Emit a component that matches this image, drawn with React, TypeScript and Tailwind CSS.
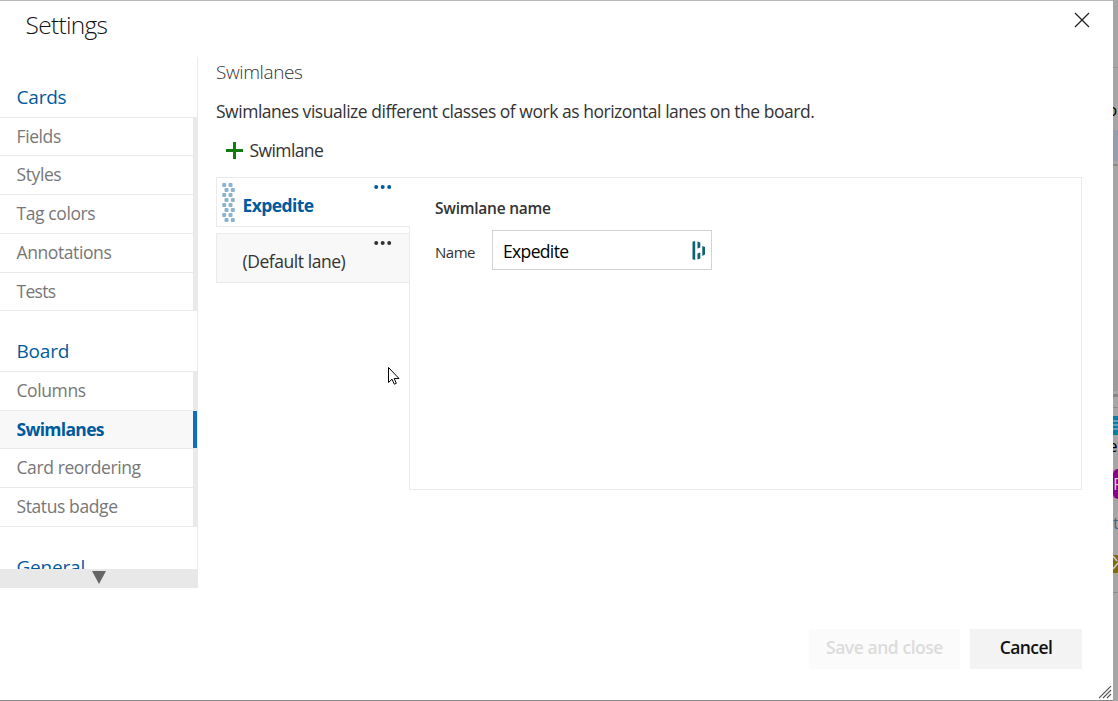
import React from 'react';

const cardItems = [
  { label: 'Fields', h: 'h-[38px]' },
  { label: 'Styles', h: 'h-[39px]' },
  { label: 'Tag colors', h: 'h-[39px]' },
  { label: 'Annotations', h: 'h-[39px]' },
  { label: 'Tests', h: 'h-[38px]' },
];

const boardItems = [
  { label: 'Columns', h: 'h-[39px]' },
  { label: 'Swimlanes', h: 'h-[38px]' },
  { label: 'Card reordering', h: 'h-[39px]' },
  { label: 'Status badge', h: 'h-[39px]' },
];

function NavGroup({ title, items, active }: { title: string; items: { label: string; h: string }[]; active?: string }) {
  return (
    <section>
      <h2 className="flex h-[61px] items-end border-b border-[#eaeaea] pb-[6px] pl-[16.5px] text-[19px] leading-[28px] tracking-[-0.2px] text-[#005a9e]">
        {title}
      </h2>
      {items.map(({ label, h }) => {
        const on = label === active;
        return (
          <div key={label} className={`${h} flex`}>
            <div
              className={`flex flex-1 items-center border-b border-[#eaeaea] pb-[2px] pl-[16.5px] text-[17.5px] leading-6 ${
                on ? 'bg-[#f8f8f8] font-bold tracking-[-0.7px] text-[#005a9e]' : 'text-[#777]'
              } ${on ? '' : label === 'Tests' ? 'tracking-[-0.7px]' : 'tracking-[-0.4px]'}`}
            >
              {label}
            </div>
            <div className={`w-1 ${on ? 'border-b border-[#eaeaea] bg-[#106ebe]' : 'bg-[#eaeaea]'}`} />
          </div>
        );
      })}
    </section>
  );
}

function Sidebar() {
  return (
    <nav className="flex h-[531px] w-[198px] shrink-0 flex-col">
      <div className="h-[512px] overflow-hidden border-r border-[#eaeaea]">
        <NavGroup title="Cards" items={cardItems} />
        <NavGroup title="Board" items={boardItems} active="Swimlanes" />
        <NavGroup title="General" items={[]} />
      </div>
      <div className="flex h-[19px] justify-center bg-[#e8e8e8] pt-[2px]">
        <svg width="14" height="13" viewBox="0 0 14 13">
          <path d="M0 0H14L7 13Z" fill="#666" />
        </svg>
      </div>
    </nav>
  );
}

function Dots({ color }: { color: string }) {
  return (
    <svg width="18" height="4" viewBox="0 0 18 4" fill={color}>
      <circle cx="2.2" cy="2" r="2" />
      <circle cx="8.7" cy="2" r="2" />
      <circle cx="15.2" cy="2" r="2" />
    </svg>
  );
}

function Grip() {
  return (
    <svg width="14" height="40" viewBox="0 0 14 40" fill="#8ab4d2">
      {[0, 1, 2, 3, 4, 5, 6, 7].map((r) => (
        <g key={r}>
          <rect x={r % 2 ? 2.5 : 0.2} y={r * 5} width="4" height="4" rx="1" />
          <rect x={r % 2 ? 8.8 : 6.5} y={r * 5} width="4" height="4" rx="1" />
        </g>
      ))}
    </svg>
  );
}

function Lanes() {
  return (
    <div className="flex h-[313px] w-[866px]">
      <div className="flex w-[194px] shrink-0 flex-col">
        <div className="flex h-[50px] border border-r-0 border-[#eaeaea] bg-white">
          <div className="w-[25.5px] shrink-0 pl-[5px] pt-[5px]"><Grip /></div>
          <div className="flex-1 pt-[15px] text-[17.5px] font-bold leading-6 tracking-[-0.6px] text-[#005a9e]">Expedite</div>
          <div className="flex w-[36px] items-start pt-[7px]"><Dots color="#005a9e" /></div>
        </div>
        <div className="h-[6px] border-r border-[#eaeaea]" />
        <div className="flex h-[50px] border border-[#eaeaea] bg-[#f8f8f8]">
          <div className="flex-1 pl-[25.5px] pt-[15px] text-[17.5px] leading-6 tracking-[-0.45px] text-[#333]">(Default lane)</div>
          <div className="flex w-[35px] items-start pt-[7px]"><Dots color="#333" /></div>
        </div>
        <div className="flex-1 border-r border-[#eaeaea]" />
      </div>
      <div className="flex-1 border-y border-r border-[#eaeaea] pl-[25px] pt-[18px]">
        <h3 className="text-[15.5px] font-semibold leading-6 tracking-[-0.25px] text-[#333]">Swimlane name</h3>
        <div className="mt-[10px] flex items-center">
          <label className="w-[57px] pt-[3px] text-[15px] leading-6 tracking-[-0.5px] text-[#333]">Name</label>
          <div className="flex h-10 w-[220px] items-center justify-between border border-[#d3d3d3] pl-[10px] pr-[5px]">
            <span className="pt-[1px] text-[17.5px] leading-6 tracking-[-0.65px] text-black">Expedite</span>
            <svg width="14" height="19" viewBox="0 0 14 19" fill="#0e6073">
              <path d="M.5.8 3.2 0V19L.5 18.2ZM5.5.5 8.3 1.5V6.5L5.5 7.5ZM5.5 12.5 8.3 11.5V17.5L5.5 18.5ZM10.3 5 13 6V13.5L10.3 15Z" />
            </svg>
          </div>
        </div>
      </div>
    </div>
  );
}

function BoardEdge() {
  return (
    <div className="flex h-[701px] w-[5px] shrink-0 flex-col overflow-hidden bg-[#a6a6a6] text-[17px]">
      <div className="h-[68px] border-b border-[#969696]" />
      <div className="flex h-[62px] items-center justify-start pt-[22px]"><span className="-ml-[6px] text-black">o</span></div>
      <div className="h-[31px] bg-[#929eab]" />
      <div className="h-[5px] border-b-2 border-[#8b8b8b]" />
      <div className="h-[194px]" />
      <div className="h-[31px] bg-[#9b9b9b]" />
      <div className="mt-[3px] h-[3px] bg-[#858585]" />
      <div className="h-[11px] border-b border-[#8c8c8c]" />
      <div className="mt-2 h-[19px] bg-[#087e9d]">
        <svg width="5" height="19" viewBox="0 0 5 19"><path d="M0 5H5M0 9H5M0 13H5" stroke="#b6cbd1" /></svg>
      </div>
      <div className="h-[24px] leading-[22px]"><span className="-ml-[5px] text-black">e</span></div>
      <div className="mt-[10px] flex h-[30px] items-center overflow-hidden rounded-l-[5px] bg-[#8b008b] text-[#ccc]">F</div>
      <div className="mt-[14px] h-5 leading-5 text-[#44627d]">t</div>
      <div className="mt-[22px] h-[18px] bg-[#806a10]">
        <svg width="5" height="18" viewBox="0 0 5 18"><path d="M0 1 4 6M0 14 5 8" stroke="#ccc" strokeWidth="1.5" fill="none" /></svg>
      </div>
      <div className="h-[20px] border-b border-[#8c8c8c]" />
    </div>
  );
}

export default function App() {
  return (
    <div className="relative flex h-[701px] w-[1118px] overflow-hidden bg-white font-['Open_Sans',sans-serif]">
      <div className="flex h-[701px] w-[1113px] flex-col border-b border-t border-b-[#888] border-t-[#b8b8b8] bg-white">
        <header className="flex h-[56px] justify-between pl-[25.5px] pr-[23px]">
          <h1 className="pt-2 text-[24.5px] font-[350] leading-8 tracking-[-0.7px] text-[#111]">Settings</h1>
          <svg className="mt-[11px]" width="16" height="16" viewBox="0 0 16 16">
            <path d="M1 1 15 15M15 1 1 15" stroke="#222" strokeWidth="1.3" />
          </svg>
        </header>
        <div className="flex">
          <Sidebar />
          <main className="flex flex-col pl-[18px]">
            <h2 className="pt-[1px] text-[19px] font-light leading-[28px] tracking-[-0.4px] text-[#333]">Swimlanes</h2>
            <p className="mt-[13px] whitespace-nowrap text-[17.5px] leading-6 tracking-[-0.475px] text-[#333]">
              Swimlanes visualize different classes of work as horizontal lanes on the board.
            </p>
            <button className="mb-[15px] mt-[15px] flex items-center gap-[6.5px] pl-[10px] text-[17.5px] leading-6 tracking-[-0.6px] text-[#333]">
              <svg width="17" height="17" viewBox="0 0 17 17">
                <path d="M8.5 0V17M0 8.5H17" stroke="#107c10" strokeWidth="3" />
              </svg>
              Swimlane
            </button>
            <Lanes />
          </main>
        </div>
        <footer className="mt-[41px] flex justify-end gap-[10px] pr-[31px] text-[17.5px] font-semibold leading-6">
          <button className="h-10 w-[151px] bg-[#fbfbfb] pb-[4px] tracking-[-0.45px] text-[#dcdcdc]">Save and close</button>
          <button className="h-10 w-[112px] bg-[#f3f3f3] pb-[4px] tracking-[-0.6px] text-[#111]">Cancel</button>
        </footer>
      </div>
      <BoardEdge />
      <svg className="absolute left-[1099px] top-[686px]" width="13" height="13" viewBox="0 0 13 13">
        <path d="M0 12 12 0M4 12 12 4M8 12 12 8" stroke="#555" strokeWidth="1.1" />
      </svg>
      <svg className="absolute left-[388px] top-[367px]" width="12" height="18" viewBox="0 0 12 18">
        <path d="M.5.5V15.5L4 12.2 6.3 17.2 8.3 16.3 6.2 11.5H11Z" fill="white" stroke="black" />
      </svg>
    </div>
  );
}
